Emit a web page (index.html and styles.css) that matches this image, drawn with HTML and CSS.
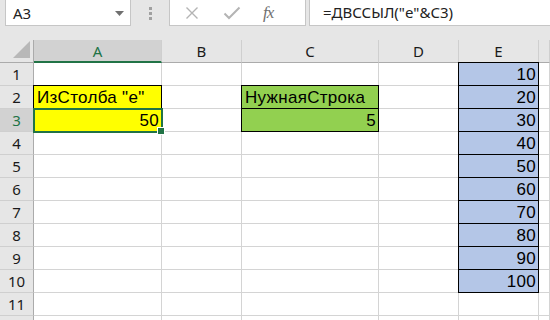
FILE: index.html
```html
<!DOCTYPE html>
<html lang="ru">
<head>
<meta charset="UTF-8">
<title>Excel</title>
<link rel="stylesheet" href="styles.css">
</head>
<body>
<div class="toolbar">
  <div class="namebox">
    <span>A3</span>
    <svg class="drop" width="9" height="5" viewBox="0 0 9 5"><path d="M0 0h9L4.5 5z" fill="#707070"/></svg>
  </div>
  <div class="grip"><i></i><i></i><i></i></div>
  <div class="fxbox">
    <svg width="14" height="14" viewBox="0 0 14 14"><path d="M1.5 1.5l11 11M12.5 1.5l-11 11" stroke="#b4b4b4" stroke-width="1.4" fill="none"/></svg>
    <svg width="18" height="14" viewBox="0 0 18 14"><path d="M1.5 7.5l4.5 4.5L16.5 1.5" stroke="#b4b4b4" stroke-width="2" fill="none"/></svg>
    <span class="fx">fx</span>
  </div>
  <div class="formula">=ДВССЫЛ("e"&amp;C3)</div>
</div>

<div class="sheet">
  <div class="corner"><svg width="17" height="17" viewBox="0 0 17 17"><path d="M17 0v17H0z" fill="#b8b8b8"/></svg></div>
  <div class="col sel">A</div>
  <div class="col">B</div>
  <div class="col">C</div>
  <div class="col">D</div>
  <div class="col">E</div>
  <div class="col"></div>

  <div class="row">1</div>
  <div class="cell"></div><div class="cell"></div><div class="cell"></div><div class="cell"></div>
  <div class="cell num blue">10</div><div class="cell"></div>

  <div class="row">2</div>
  <div class="cell yellow">ИзСтолба "e"</div><div class="cell"></div>
  <div class="cell green">НужнаяСтрока</div><div class="cell"></div>
  <div class="cell num blue">20</div><div class="cell"></div>

  <div class="row sel">3</div>
  <div class="cell num yellow active">50</div><div class="cell"></div>
  <div class="cell num green">5</div><div class="cell"></div>
  <div class="cell num blue">30</div><div class="cell"></div>

  <div class="row">4</div>
  <div class="cell"></div><div class="cell"></div><div class="cell"></div><div class="cell"></div>
  <div class="cell num blue">40</div><div class="cell"></div>

  <div class="row">5</div>
  <div class="cell"></div><div class="cell"></div><div class="cell"></div><div class="cell"></div>
  <div class="cell num blue">50</div><div class="cell"></div>

  <div class="row">6</div>
  <div class="cell"></div><div class="cell"></div><div class="cell"></div><div class="cell"></div>
  <div class="cell num blue">60</div><div class="cell"></div>

  <div class="row">7</div>
  <div class="cell"></div><div class="cell"></div><div class="cell"></div><div class="cell"></div>
  <div class="cell num blue">70</div><div class="cell"></div>

  <div class="row">8</div>
  <div class="cell"></div><div class="cell"></div><div class="cell"></div><div class="cell"></div>
  <div class="cell num blue">80</div><div class="cell"></div>

  <div class="row">9</div>
  <div class="cell"></div><div class="cell"></div><div class="cell"></div><div class="cell"></div>
  <div class="cell num blue">90</div><div class="cell"></div>

  <div class="row">10</div>
  <div class="cell"></div><div class="cell"></div><div class="cell"></div><div class="cell"></div>
  <div class="cell num blue">100</div><div class="cell"></div>

  <div class="row">11</div>
  <div class="cell"></div><div class="cell"></div><div class="cell"></div><div class="cell"></div>
  <div class="cell"></div><div class="cell"></div>

  <div class="row"></div>
  <div class="cell"></div><div class="cell"></div><div class="cell"></div><div class="cell"></div>
  <div class="cell"></div><div class="cell"></div>
</div>
</body>
</html>
```

FILE: styles.css
```css
* {box-sizing: border-box;margin: 0;padding: 0;}
body {width: 550px;height: 320px;overflow: hidden;background: #e6e6e6;font-family: "Noto Sans", sans-serif;}

/* formula bar */
.toolbar {display: flex;height: 40px;align-items: flex-start;padding-left: 5px;}
.namebox {width: 126px;height: 27px;margin-top: -1px;background: #fff;border: 1px solid #c6c6c6;display: flex;align-items: center;justify-content: space-between;padding: 0 6px 0 7px;font-size: 15px;color: #222;}
.namebox .drop {margin-top: 1px;}
.grip {width: 38px;height: 26px;display: flex;flex-direction: column;align-items: center;justify-content: center;gap: 2px;}
.grip i {display: block;width: 3px;height: 3px;background: #a0a0a0;}
.fxbox {width: 137px;height: 27px;margin-top: -1px;background: #fff;border: 1px solid #c6c6c6;display: flex;align-items: center;padding-left: 15px;gap: 24px;}
.fxbox .fx {font-family: "Liberation Serif", serif;font-style: italic;font-size: 17px;color: #707070;margin-left: -2px;letter-spacing: -1px;}
.formula {flex: 1;height: 27px;margin-top: -1px;margin-left: 3px;background: #fff;border: 1px solid #c6c6c6;border-right: none;padding-left: 13px;font-size: 15px;line-height: 25px;color: #222;}

/* grid */
.sheet {display: grid;height: 280px;overflow: hidden;grid-template-columns: 34px 128px 80px 137px 80px 80px 1fr;grid-auto-rows: 23px;background: #fff;}
.corner {background: #e6e6e6;border-right: 1px solid #ababab;border-bottom: 1px solid #ababab;display: flex;align-items: flex-end;justify-content: flex-end;padding: 0 3px 4px 0;}
.col {background: #e6e6e6;border-right: 1px solid #cfcfcf;border-bottom: 1px solid #ababab;text-align: center;font-size: 15px;line-height: 22px;color: #1a1a1a;}
.col.sel {background: #d2d2d2;color: #217346;border-bottom: 2px solid #217346;}
.row {background: #e6e6e6;border-right: 1px solid #ababab;border-bottom: 1px solid #cfcfcf;text-align: center;font-size: 15px;line-height: 22px;color: #1a1a1a;}
.row.sel {background: #d2d2d2;color: #217346;}
.cell {border-right: 1px solid #d4d4d4;border-bottom: 1px solid #d4d4d4;font-family: "Liberation Sans", Arial, sans-serif;font-size: 17px;letter-spacing: 0.3px;line-height: 23px;padding: 0 2px 0 3px;color: #000;white-space: nowrap;}
.num {text-align: right;}
.yellow, .green, .blue {position: relative;border-right-color: #000;border-bottom-color: #000;box-shadow: -1px -1px 0 #000, 0 -1px 0 #000, -1px 0 0 #000;}
.yellow {background: #ffff00;}
.green {background: #92d050;}
.blue {background: #b4c6e7;}
.active {z-index: 2;outline: 2px solid #217346;outline-offset: -1px;}
.active::after {content: "";position: absolute;right: -4px;bottom: -4px;width: 6px;height: 6px;background: #217346;border: 1px solid #fff;}
```
